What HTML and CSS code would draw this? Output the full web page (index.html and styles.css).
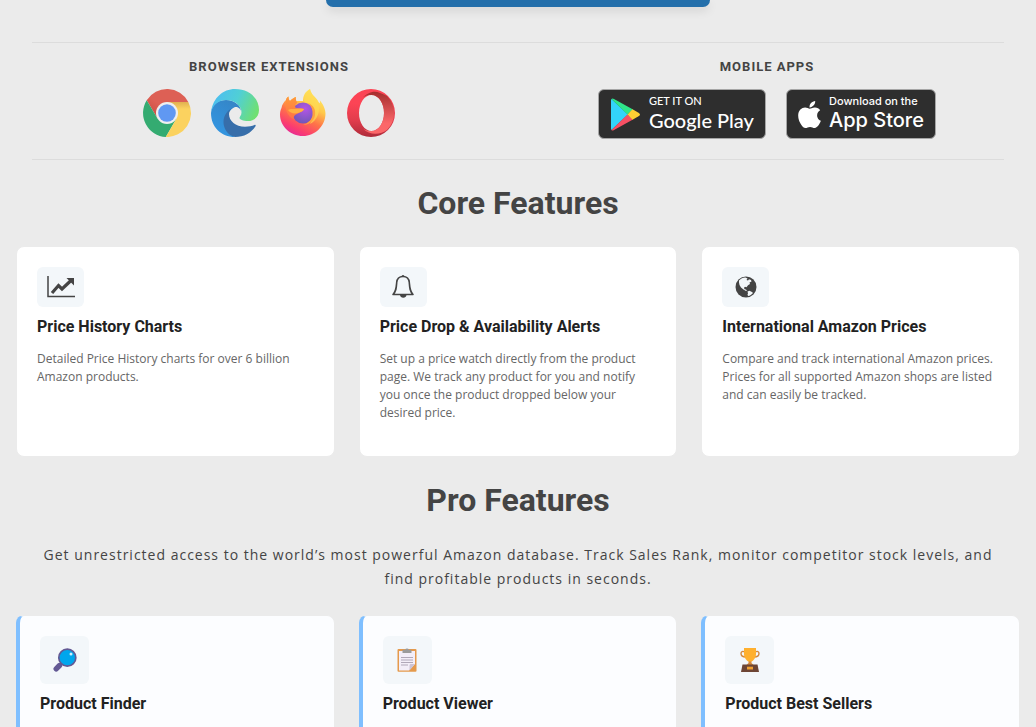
FILE: index.html
```html
<!DOCTYPE html>
<html lang="en">
<head>
    <meta charset="utf-8">
    <meta name="viewport" content="width=device-width, initial-scale=1">
    <title>Features</title>
    <link rel="stylesheet" href="styles.css">
</head>

<body>
<main>
    <button class="cta" type="button" aria-label="Get started"></button>

    <div class="downloads">
        <section class="download-group">
            <h3>Browser Extensions</h3>
            <div class="browsers">
                <a href="#" aria-label="Chrome">
                    <svg width="48" height="48" viewBox="0 0 48 48">
                        <defs>
                            <linearGradient id="cr" x1="0" y1="1" x2="1" y2="0">
                                <stop offset="0" stop-color="#c5483c"/>
                                <stop offset=".4" stop-color="#dd6055"/>
                            </linearGradient>
                            <linearGradient id="cy" x1="0" y1="0" x2="0" y2="1">
                                <stop offset="0" stop-color="#e0b050"/>
                                <stop offset=".2" stop-color="#fbd25f"/>
                            </linearGradient>
                        </defs>
                        <path fill="url(#cr)" d="M24 24V13h21.3A24 24 0 0 0 3.7 11.3l10.8 18.2z"/>
                        <path fill="#34ab71" d="M14.5 29.5L3.7 11.3A24 24 0 0 0 22.8 48l10.7-18.5L24 24z"/>
                        <path fill="url(#cy)" d="M33.5 29.5L22.8 48A24 24 0 0 0 45.3 13H24v11z"/>
                        <circle cx="24" cy="24" r="11" fill="#efefef"/>
                        <circle cx="24" cy="24" r="8.8" fill="#6098f2"/>
                    </svg>
                </a>
                <a href="#" aria-label="Edge">
                    <svg width="48" height="48" viewBox="0 0 48 48">
                        <defs>
                            <linearGradient id="eg" x1="0" y1=".3" x2="1" y2=".6">
                                <stop offset="0" stop-color="#4cbdf2"/>
                                <stop offset=".5" stop-color="#50cfd6"/>
                                <stop offset="1" stop-color="#70e070"/>
                            </linearGradient>
                            <linearGradient id="eb" x1="0" y1="1" x2=".6" y2="0">
                                <stop offset="0" stop-color="#3399e6"/>
                                <stop offset="1" stop-color="#3586c8"/>
                            </linearGradient>
                        </defs>
                        <path fill="url(#eb)" d="M0 24C1 15 7 11 15 11c9 0 15 6 15 11-1-3.500-4-4-6-4-5 2-9 9-9 15 0 8 3 12 9 15C10 48 0 38 0 24z"/>
                        <path fill="#376eaa" d="M24 48c-8-2-11.500-9-11.500-15C12.500 26 17 20 24 18c-4 1-6 3.500-6 7 0 7 6.500 12.700 16 12.700 4 0 7-.7 9.500-1.700 1-.4 1.500.2 1 1.200C40 44 33 48 24 48z"/>
                        <path fill="url(#eg)" d="M.3 22C2 9 12 0 24 0c14 0 24 9 24 21 0 7-5 11-11 11-5 0-8.500-1.500-8.500-3s2-2.500 2-5.500C30.500 17 24 11 15 11 8 11 3 15 .3 22z"/>
                    </svg>
                </a>
                <a href="#" aria-label="Firefox">
                    <svg width="48" height="48" viewBox="0 0 48 48">
                        <defs>
                            <linearGradient id="ff" x1=".8" y1="0" x2=".3" y2="1">
                                <stop offset="0" stop-color="#fff36a"/>
                                <stop offset=".35" stop-color="#ffc84a"/>
                                <stop offset=".6" stop-color="#ff7448"/>
                                <stop offset=".85" stop-color="#fa3c70"/>
                                <stop offset="1" stop-color="#e52b98"/>
                            </linearGradient>
                            <radialGradient id="fp" cx=".6" cy=".3" r=".7">
                                <stop offset="0" stop-color="#b455e6"/>
                                <stop offset="1" stop-color="#7058b8"/>
                            </radialGradient>
                            <linearGradient id="fh" x1="0" y1="0" x2="0" y2="1">
                                <stop offset="0" stop-color="#ff9a3a"/>
                                <stop offset="1" stop-color="#ff7048"/>
                            </linearGradient>
                        </defs>
                        <path fill="url(#ff)" d="M2.500 19C3 15.500 5 13 7 11c0-1 1-2.500 2.500-3.500C9.500 9.500 10 11 11 12c2-2 4-3.500 6-4-.5 1.500-.5 2.500 0 4l7 0C24 7 26 2.500 31 0c1 6 6 8 8 12 1 2 2 3 2 1.500v-2c3 3.500 5.500 9 5.500 13C46.500 37 36 47 24 47 11 47 1 37 1 25.500 1 23 1.500 21 2.500 19z"/>
                        <path fill="#ffda52" opacity=".7" d="M25 12c0-5 2-9 6-12 1 6 6 8 8 13 3 9-1 19-8 22 4-6 3-15-6-23z"/>
                        <circle cx="24" cy="24" r="10.500" fill="url(#fp)"/>
                        <path fill="url(#fh)" d="M7 11c0-1 1-2.500 2.500-3.500C9.500 9.500 10 11 11 12c2-2 4-3.500 6-4-.5 1.500 0 4 1.500 6-3 1.500-3 3.500-1.500 5 2 1 6 0 8 1-1 3-4 3-6 4.500-3 1-5 3-4 6C9 28 5 20 7 11z"/>
                        <path fill="#ffb043" d="M9 21c3-2 7 0 9-1.500 3 0 5-.5 7 .5-1 3-4 3-6 4-4 1-8 0-10-3z"/>
                        <path fill="#ffa13f" d="M29 14c5 2 8 6 7 12-1 6-6 10-12 10 6-2 9-6 9.500-10 .5-5-1-9-4.500-12z"/>
                    </svg>
                </a>
                <a href="#" aria-label="Opera">
                    <svg width="48" height="48" viewBox="0 0 48 48">
                        <defs>
                            <linearGradient id="ol" x1="0" y1="0" x2="0" y2="1">
                                <stop offset=".3" stop-color="#fc4455"/>
                                <stop offset=".65" stop-color="#e23c4c"/>
                                <stop offset="1" stop-color="#ae2b3a"/>
                            </linearGradient>
                            <linearGradient id="or" x1="0" y1="0" x2="0" y2="1">
                                <stop offset="0" stop-color="#a52e2e"/>
                                <stop offset=".75" stop-color="#fb6769"/>
                            </linearGradient>
                        </defs>
                        <path fill="url(#ol)" fill-rule="evenodd" d="M24 0a24 24 0 1 0 0 48 24 24 0 1 0 0-48zm.5 6c7 0 12.500 8 12.500 18s-5.500 18-12.500 18S12 34 12 24 17.500 6 24.500 6z"/>
                        <path fill="url(#or)" d="M16 8.500C20 4 27 1 33 4c3 1 5 2 7 3a24 24 0 0 1 0 34c-6 4.500-17 6-24-1.500 3 2 5 2.500 8.500 2.500C31.500 42 37 34 37 24S31.500 6 24.500 6c-3.500 0-6 .5-8.500 2.500z"/>
                    </svg>
                </a>
            </div>
        </section>
        <section class="download-group">
            <h3>Mobile Apps</h3>
            <div class="stores">
                <a class="store google" href="#">
                    <svg width="29" height="33" viewBox="0 0 29 33">
                        <path fill="#33d4fa" d="M.5 1C0 1.500 0 2 0 3v27c0 1 0 1.500.5 2L17 16.500z"/>
                        <path fill="#2fe58a" d="M.5 1C1 .3 2 .3 3 1l19 10.500-5.500 5z"/>
                        <path fill="#f65064" d="M.5 32c.5.700 1.500.7 2.500 0l19-10.500-5.500-5z"/>
                        <path fill="#ffcf33" d="M21.500 11.200l6 3.500c2 1.200 2 2.400 0 3.600l-6 3.500-5-5.300z"/>
                    </svg>
                    <span class="store-text"><small>GET IT ON</small><b>Google Play</b></span>
                </a>
                <a class="store apple" href="#">
                    <svg width="23" height="27" viewBox="4 32 376 448">
                        <path fill="#fff" d="M318.700 268.700c-.2-36.700 16.400-64.400 50-84.800-18.800-26.900-47.200-41.700-84.700-44.600-35.500-2.800-74.300 20.700-88.500 20.700-15 0-49.400-19.700-76.400-19.700C63.300 141.200 4 184.800 4 273.500q0 39.300 14.400 81.200c12.800 36.700 59 126.700 107.200 125.200 25.200-.6 43-17.900 75.800-17.900 31.800 0 48.300 17.900 76.400 17.900 48.600-.7 90.400-82.500 102.600-119.300-65.200-30.700-61.700-90-61.700-91.900zm-56.600-164.200c27.300-32.400 24.800-61.900 24-72.500-24.100 1.400-52 16.400-67.900 34.900-17.500 19.800-27.800 44.300-25.600 71.900 26.100 2 49.900-11.400 69.500-34.300z"/>
                    </svg>
                    <span class="store-text"><small>Download on the</small><b>App Store</b></span>
                </a>
            </div>
        </section>
    </div>

    <h2>Core Features</h2>
    <div class="cards">
        <article class="card">
            <span class="icon">
                <svg width="28" height="22" viewBox="0 0 28 22" fill="none" stroke="#444">
                    <path stroke-width="1.500" d="M1 0v20.500h27"/>
                    <path stroke-width="3.200" d="M5 17l6.500-7.500L15 13l9-8.500"/>
                    <path fill="#444" stroke="none" d="M19.500 2H27v7.500z"/>
                </svg>
            </span>
            <h4>Price History Charts</h4>
            <p>Detailed Price History charts for over 6 billion Amazon products.</p>
        </article>
        <article class="card">
            <span class="icon">
                <svg width="24" height="26" viewBox="0 0 24 26" fill="none" stroke="#444" stroke-width="1.600">
                    <path stroke-linejoin="round" d="M12 2.500c-4 0-6 2.500-6.300 6C5.300 14 5.200 17 2 20.500h20c-3.200-3.500-3.300-6.500-3.700-12-.3-3.500-2.300-6-6.300-6z"/>
                    <path fill="#444" stroke="none" d="M10.500 2.500a1.500 1.500 0 0 1 3 0zM9 21h6.500a3.300 3.300 0 0 1-6.500 0z"/>
                </svg>
            </span>
            <h4>Price Drop &amp; Availability Alerts</h4>
            <p>Set up a price watch directly from the product page. We track any product for you and notify you once the product dropped below your desired price.</p>
        </article>
        <article class="card">
            <span class="icon">
                <svg width="22" height="22" viewBox="0 0 22 22">
                    <circle cx="11" cy="11" r="10.500" fill="#444"/>
                    <path fill="#f3f7fa" d="M4 4.500C6 2.500 8 1.500 10.500 1.600l2 1-1 1.400 1.500.5 1-1.300 2 .8.500 1.500-2 1 .5 1.500-2 1.200-1.500 2-1.500-.5-1 1 .5 1.500 1.500.2 1 1.600-1.500-.2-2-1.300L6 11.500 4.500 9 4 6.500zM12.500 15.500l2-.7 2.500 1.200 1 1c-1.300 1.600-3 2.700-5 3l-.5-1.500.5-1z"/>
                </svg>
            </span>
            <h4>International Amazon Prices</h4>
            <p>Compare and track international Amazon prices. Prices for all supported Amazon shops are listed and can easily be tracked.</p>
        </article>
    </div>

    <h2>Pro Features</h2>
    <p class="intro">Get unrestricted access to the world’s most powerful Amazon database. Track Sales Rank, monitor competitor stock levels, and find profitable products in seconds.</p>
    <div class="cards">
        <article class="card pro">
            <span class="icon">
                <svg width="24" height="24" viewBox="0 0 24 24">
                    <path stroke="#635994" stroke-width="5.400" stroke-linecap="round" d="M3.200 20.800l3.300-3.300"/>
                    <path stroke="#635994" stroke-width="2.500" d="M6 18l4-4"/>
                    <circle cx="14.300" cy="9.700" r="8.500" fill="#00a6ed" stroke="#635994" stroke-width="1.700"/>
                    <circle cx="18" cy="6" r="1.500" fill="#cdeefb"/>
                </svg>
            </span>
            <h4>Product Finder</h4>
        </article>
        <article class="card pro">
            <span class="icon">
                <svg width="24" height="24" viewBox="0 0 24 24">
                    <rect x="2.500" y="1" width="19" height="22.700" rx="1" fill="#e59a4c"/>
                    <path fill="#f3eef8" d="M4 3h16v13l-6 6.500H4z"/>
                    <path fill="#cdc4d6" d="M20 16h-4c-1 0-1.500.5-1.500 1.500v5z"/>
                    <path fill="#9b9b9b" d="M7.500 1.800h2.600a2 2 0 0 1 3.800 0h2.600V5h-9z"/>
                    <path stroke="#b0a8b8" d="M6 9.500h12M6 12h12M6 14.500h12M6 17h7"/>
                </svg>
            </span>
            <h4>Product Viewer</h4>
        </article>
        <article class="card pro">
            <span class="icon">
                <svg width="24" height="24" viewBox="0 0 24 24">
                    <path fill="none" stroke="#d3883e" stroke-width="1.400" d="M7 4C4.500 2.800 3 3.500 3 5.500s2 3.500 5 3.500M17 4c2.500-1.200 4-.5 4 1.500S19 9 16 9"/>
                    <path fill="#d3883e" d="M10.500 12h3v3l2 2h-7l2-2z"/>
                    <path fill="#ffb02e" d="M6 0h12v6c0 4-3 7-4.500 7.500h-3C9 13 6 10 6 6z"/>
                    <path fill="#6d4534" d="M4.500 16.500h15L21 24H3z"/>
                    <rect x="9" y="18.700" width="6" height="2.800" fill="#f0a030"/>
                </svg>
            </span>
            <h4>Product Best Sellers</h4>
        </article>
    </div>
</main>
</body>
</html>
```

FILE: styles.css
```css
* {
    box-sizing: border-box;
    margin: 0;
    padding: 0;
}

body {
    background: #ebebeb;
    color: #444;
    font-family: "Open Sans", "Noto Sans", sans-serif;
}

main {
    padding: 0 16px;
}

svg {
    display: block;
}

h2,
h3,
h4 {
    font-family: Roboto, sans-serif;
}

h2 {
    margin: 23px 0;
    font-size: 32px;
    line-height: 40px;
    text-align: center;
}

.cta {
    display: block;
    width: 100%;
    max-width: 384px;
    height: 7px;
    margin: 0 auto 35px;
    border: 0;
    border-radius: 0 0 8px 8px;
    background: #246fab;
    box-shadow: 0 4px 10px rgba(0, 0, 0, 0.1);
    cursor: pointer;
}

.downloads {
    display: grid;
    grid-template-columns: 1fr 1fr;
    gap: 24px;
    margin: 0 16px;
    padding: 16px 0 20px;
    border-top: 1px solid #dcdcdc;
    border-bottom: 1px solid #dcdcdc;
}

.download-group h3 {
    margin-bottom: 14px;
    font-size: 13px;
    line-height: 16px;
    letter-spacing: 1px;
    text-align: center;
    text-transform: uppercase;
}

.browsers,
.stores {
    display: flex;
    justify-content: center;
    gap: 20px;
}

.store {
    display: flex;
    align-items: center;
    height: 50px;
    border: 1px solid #a6a6a6;
    border-radius: 6px;
    background: #2e2e2e;
    color: #fff;
    text-decoration: none;
    white-space: nowrap;
}

.store-text {
    padding-bottom: 2px;
}

.store-text small,
.store-text b {
    display: block;
    font-weight: 500;
}

.store-text small {
    font-size: 11px;
    line-height: 14px;
}

.store-text b {
    font-size: 20px;
    line-height: 24px;
}

.google {
    width: 168px;
    gap: 9px;
    padding-left: 12px;
    font-family: Lato, sans-serif;
}

.apple {
    width: 150px;
    gap: 8px;
    padding-left: 11px;
    font-family: Inter, sans-serif;
}

.cards {
    display: grid;
    grid-template-columns: repeat(3, 1fr);
    gap: 24px;
}

.card {
    padding: 20px;
    border: 1px solid #ebebeb;
    border-radius: 8px;
    background: #fff;
}

.icon {
    display: flex;
    align-items: center;
    justify-content: center;
    width: 47px;
    height: 40px;
    margin-bottom: 10px;
    border-radius: 6px;
    background: #f3f7fa;
}

.card h4 {
    margin-bottom: 13px;
    color: #222;
    font-size: 16px;
    line-height: 20px;
}

.card p {
    margin-bottom: 14px;
    color: #666;
    font-size: 12px;
    line-height: 18px;
}

.pro {
    border-left: 4px solid #7fbfff;
    background: #fcfdff;
}

.pro .icon {
    width: 49px;
    height: 48px;
}

.intro {
    margin: 0 16px 24px;
    font-size: 14px;
    line-height: 24px;
    letter-spacing: 1px;
    text-align: center;
}
```
